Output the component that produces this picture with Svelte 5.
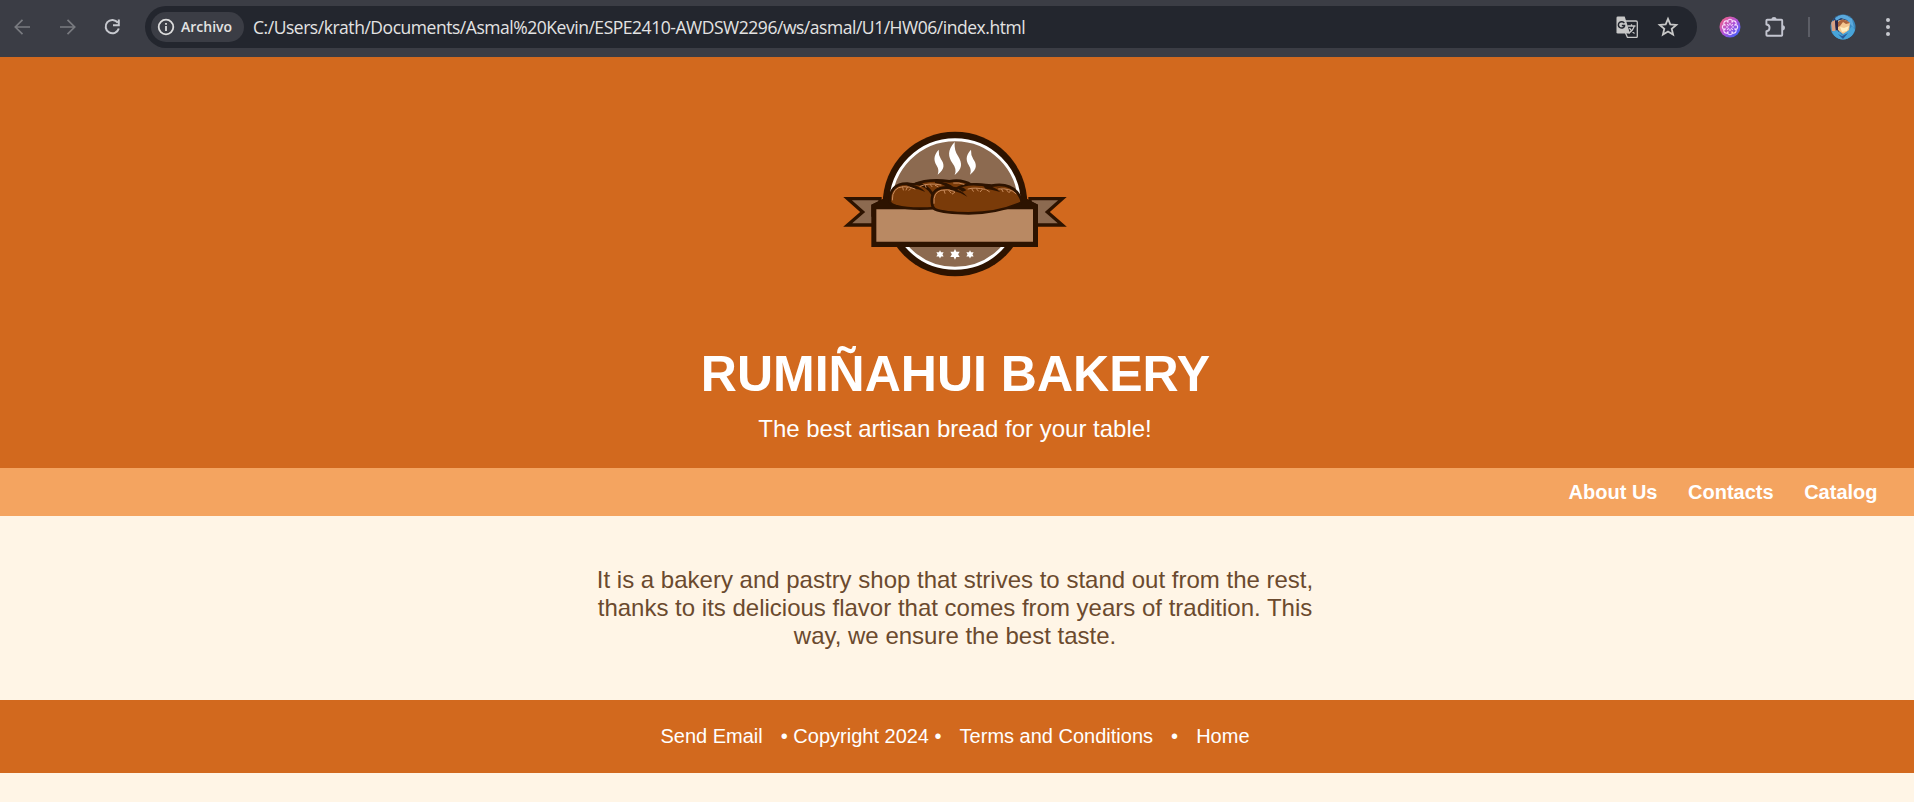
<script>
  const path = 'C:/Users/krath/Documents/Asmal%20Kevin/ESPE2410-AWDSW2296/ws/asmal/U1/HW06/index.html';
  const links = ['About Us', 'Contacts', 'Catalog'];
  const petals = [0, 45, 90, 135, 180, 225, 270, 315];
</script>

<div class="toolbar">
  <div class="history">
    <svg class="dim" width="24" height="24" viewBox="0 0 24 24"><path d="M19 12H4.800M11.500 4.800 4.300 12l7.200 7.200" /></svg>
    <svg class="dim" width="24" height="24" viewBox="0 0 24 24"><path d="M4 12h14.200M11.500 4.800l7.200 7.200-7.200 7.200" /></svg>
    <svg width="24" height="24" viewBox="0 0 24 24"><path d="M16.800 7.700A6.700 6.700 0 1 0 17.800 13.500M17.800 4.500v5.800H12" /></svg>
  </div>
  <div class="address">
    <div class="chip">
      <svg width="18" height="18" viewBox="0 0 18 18"><circle cx="9" cy="9" r="7.3" /><path d="M9 8v5M9 5v1.8" /></svg>
      <span class="chip-label">Archivo</span>
    </div>
    <span class="url">{path}</span>
    <svg class="translate" width="22" height="22" viewBox="0 0 22 22">
      <path d="M9 5h11q1.300 0 1.300 1.300v13.900q0 1.300-1.300 1.300H11.500L9.500 17" fill="none" stroke="#c7c7c7" stroke-width="1.3" />
      <path d="M1.800.5h6.900L14 17.500H1.800Q.5 17.500 .5 16.200V1.800Q.5.5 1.800.5z" fill="#c7c7c7" />
      <path d="M8.300 7.200A3.200 3.200 0 1 0 8.500 10.200V9.500H5.800" fill="none" stroke="#23262e" stroke-width="1.500" />
      <path d="M11.500 10h8M15.500 8.200V10M18.200 10q-1 4.200-5.600 7.200M13.500 12q1.500 3.200 5 5.500" fill="none" stroke="#c7c7c7" stroke-width="1.300" />
    </svg>
    <svg class="star" width="22" height="22" viewBox="0 0 22 22"><path d="m11 2.900 2.300 5.500 6 .5-4.600 3.900 1.400 5.800-5.100-3.100-5.100 3.100 1.400-5.800L2.700 8.900l6-.5z" /></svg>
  </div>
  <svg class="ext" width="22" height="22" viewBox="-11 -11 22 22">
    <defs>
      <linearGradient id="hue" x1="0" y1="0" x2="1" y2="1">
        <stop offset="0.1" stop-color="#f0628a" /><stop offset="0.5" stop-color="#b052d8" /><stop offset="0.9" stop-color="#3d62fb" />
      </linearGradient>
    </defs>
    <circle r="10.500" fill="url(#hue)" />
    <g fill="none" stroke="#f7dcff" stroke-width="1.100">
      {#each petals as a}
        <path d="M0-1.800V-4M-1.700-4.600A2.300 1.800 0 1 1 1.700-4.600" transform="rotate({a})" />
      {/each}
    </g>
  </svg>
  <svg class="puzzle" width="24" height="24" viewBox="0 0 24 24">
    <path d="M3.400 5.600Q3.400 4.800 4.200 4.800H18.400Q19.200 4.800 19.200 5.600V20Q19.200 20.800 18.400 20.800H4.200Q3.400 20.800 3.400 20V16.200C7.600 16 7.600 9.700 3.400 9.500z" />
    <path class="knob" d="M8.400 4.800V4Q8.600 2 11 2T13.600 4V4.800zM19.200 10.200H20Q22 10.400 22 12.800T20 15.400H19.200z" />
  </svg>
  <span class="rule"></span>
  <svg class="avatar" width="26" height="26" viewBox="0 0 26 26">
    <defs><clipPath id="face"><circle cx="13" cy="13" r="12.500" /></clipPath></defs>
    <g clip-path="url(#face)">
      <path fill="#3a88bd" d="M0 0h26v26H0z" />
      <path fill="#263e6b" d="M3 5Q12-3 21 4l-2 5-4-3L8 6 5 16z" />
      <path fill="#5aa9dc" d="M5 4Q13-3 22 5l2 9-4-4-3-4-6-2-5 3z" />
      <path fill="#d8a184" d="M1 8l4-2 1 12-4-1z" />
      <path fill="#2b2647" d="M5 7l3-1 1 12-3 1z" />
      <path fill="#f3c790" d="M8 7Q14 3 20 9L19 17 13 20 8 16z" />
      <path fill="#a9643d" d="M8 8Q13 3 20 9L16 10 13 8 10 12 8 13z" />
      <path fill="#fff0c2" d="M10 13l4 1 5-2-2 5-5 1z" />
      <path fill="#48a4d8" d="M2 18l5-2 5 5 7-5 3-4 3 4-5 10H7z" />
      <path fill="#2a5c9c" d="M8 20l4 2 6-3-5 6z" />
    </g>
  </svg>
  <svg class="menu" width="6" height="22" viewBox="0 0 6 22"><circle cx="3" cy="4" r="2" /><circle cx="3" cy="11" r="2" /><circle cx="3" cy="18" r="2" /></svg>
</div>

<header>
  <svg class="logo" width="250" height="170" viewBox="0 0 750 510">
    <g stroke="#2d1300" stroke-width="10" fill="#8c6a50">
      <path d="M150 236H53L98 276 53 315H150zM600 236H697L652 276 697 315H600z" />
    </g>
    <path fill="#2d1300" d="M124 254 160 236H590L624 254V290H124z" />
    <circle cx="375" cy="252" r="217" fill="#2d1300" />
    <circle cx="375" cy="252" r="193" fill="#8c6a50" stroke="#fff" stroke-width="9" />
    <path fill="#2d1300" d="M124 254 175 230H575L624 254V381H124z" />
    <path fill="#b98963" d="M139 268H609V365H139z" />
    <g fill="#fff">
      <path d="M326 89C309 108 312 122 319 135Q329 151 323 164C346 148 343 132 333 118Q325 105 326 89z" />
      <path d="M374 66C351 91 355 111 367 129Q382 148 374 165C397 147 398 130 384 108Q372 91 374 66z" />
      <path d="M423 89C405 108 409 122 416 135Q426 151 420 164C443 148 440 132 430 118Q422 105 423 89z" />
      {#each [[330, 12.500], [375, 16], [420, 12.500]] as [x, r]}
        <path transform="translate({x} 403) scale({r / 12})" d="M0-12 3-6 10.500-6 7 0 10.500 6 3 6 0 12-3 6-10.500 6-7 0-10.500-6-3-6z" />
      {/each}
    </g>
    <g fill="#7a3b09" stroke="#2d1300" stroke-width="8" stroke-linejoin="round">
      <path d="M250 194Q296 175 358 184Q397 177 425 195L430 250H270z" />
      <path d="M180 246C176 210 198 190 232 191Q250 195 260 191Q290 194 309 224L315 264Q245 270 198 258Q181 253 180 246z" />
      <path d="M306 250C302 213 322 202 354 202Q370 204 380 206Q400 191 440 193Q470 195 485 197Q540 187 565 222Q579 244 572 249Q505 279 416 280Q342 280 315 268Q307 263 306 250z" />
    </g>
    <g fill="#2d1300">
      <path d="M228 194Q263 192 286 216Q267 207 247 205zM315 183Q354 185 373 203L350 202Q337 190 315 189zM354 203Q397 207 412 230Q391 217 364 211zM379 203Q397 197 409 211L398 215zM458 195Q494 198 511 216Q486 208 466 206zM487 197Q517 203 550 217L526 209z" />
    </g>
    <g fill="none" stroke="#c98b5c" stroke-width="3" stroke-linecap="round">
      <path d="M187 240Q186 202 220 200 240 199 255 207M312 250Q309 218 333 211 352 206 373 214M270 199Q295 187 333 195M371 189Q387 187 402 193M414 207Q433 201 466 208M506 207Q540 203 558 221" />
      <path d="M218 201l2 9M232 202l-4 8M242 206l-5 5M285 194l3 8M300 193l6 7M316 196l8 4M342 211l3 9M357 212l6 7M374 217l-7 5M425 206l5 8M439 206l6 7M456 209l-5 6M470 210l8 5M515 208l4 7M529 209l6 7M542 212l-5 6" />
    </g>
  </svg>
  <h1>RUMIÑAHUI BAKERY</h1>
  <p>The best artisan bread for your table!</p>
</header>

<nav>
  {#each links as link}<a href="#top">{link}</a>{/each}
</nav>

<main>
  <p>It is a bakery and pastry shop that strives to stand out from the rest, thanks to its delicious flavor that comes from years of tradition. This way, we ensure the best taste.</p>
</main>

<footer>
  <p><a href="#top">Send Email</a> • Copyright 2024 • <a href="#top">Terms and Conditions</a> • <a href="#top">Home</a></p>
</footer>

<style>
  :global(body) {
    margin: 0;
    background: #fff5e6;
    font-family: "Liberation Sans", Arial, sans-serif;
  }
  svg { display: block; flex: none; }
  a { color: inherit; text-decoration: none; }
  .toolbar {
    box-sizing: border-box;
    height: 57px;
    padding-bottom: 3px;
    display: flex;
    align-items: center;
    background: #3b3d45;
  }
  .history { display: flex; gap: 21px; padding-left: 11px; width: 134px; box-sizing: content-box; }
  .history svg { fill: none; stroke: #c7c9cf; stroke-width: 2; }
  .history .dim { stroke: #797b80; stroke-width: 1.700; }
  .address {
    box-sizing: border-box;
    width: 1552px;
    height: 42px;
    padding: 0 18px 0 6px;
    border-radius: 21px;
    display: flex;
    align-items: center;
    background: #23262e;
    color: #e3e3e3;
  }
  .chip {
    box-sizing: border-box;
    width: 93px;
    height: 30px;
    padding-left: 6px;
    border-radius: 15px;
    display: flex;
    align-items: center;
    gap: 6px;
    background: #3b3d45;
  }
  .chip svg { fill: none; stroke: #dcdcdc; stroke-width: 1.800; }
  .chip-label { font: 600 14px/20px "Open Sans", sans-serif; }
  .url {
    flex: 1;
    padding-left: 9px;
    font: 400 17.500px/24px "Open Sans", sans-serif;
    letter-spacing: -0.465px;
    white-space: nowrap;
  }
  .star { margin-left: 19px; fill: none; stroke: #c7c7c7; stroke-width: 1.800; }
  .ext { margin-left: 22px; }
  .puzzle { margin-left: 22px; fill: none; stroke: #c3c5d0; stroke-width: 1.900; stroke-linejoin: round; }
  .puzzle .knob { fill: #c3c5d0; stroke: none; }
  .rule { width: 2px; height: 20px; margin-left: 21px; background: #5c5e66; }
  .avatar { margin-left: 20px; }
  .menu { margin-left: 29px; fill: #c7c9cf; }

  header {
    box-sizing: border-box;
    height: 411px;
    padding: 63px 4px 0 0;
    display: flex;
    flex-direction: column;
    align-items: center;
    background: #d2691e;
    color: #fff;
  }
  h1 { margin: 55px 0 0 1px; font-size: 50px; line-height: 58px; white-space: nowrap; }
  header p { margin: 12px 0 0; font-size: 24px; line-height: 28px; }
  nav {
    box-sizing: border-box;
    height: 48px;
    padding: 0 36.500px 0 0;
    display: flex;
    justify-content: flex-end;
    align-items: center;
    gap: 30.560px;
    background: #f4a460;
    color: #fff;
    font-size: 20px;
    font-weight: bold;
  }
  main {
    box-sizing: border-box;
    height: 184px;
    padding: 50px 4px 0 0;
    display: flex;
    justify-content: center;
    color: #6b4a2e;
  }
  main p { width: 750px; margin: 0; font-size: 24px; line-height: 28px; text-align: center; }
  footer {
    box-sizing: border-box;
    height: 73px;
    padding-right: 4px;
    display: flex;
    align-items: center;
    justify-content: center;
    background: #d2691e;
    color: #fff;
    font-size: 20px;
  }
  footer p { margin: 0; }
  footer a { margin: 0 12.500px; }
</style>
